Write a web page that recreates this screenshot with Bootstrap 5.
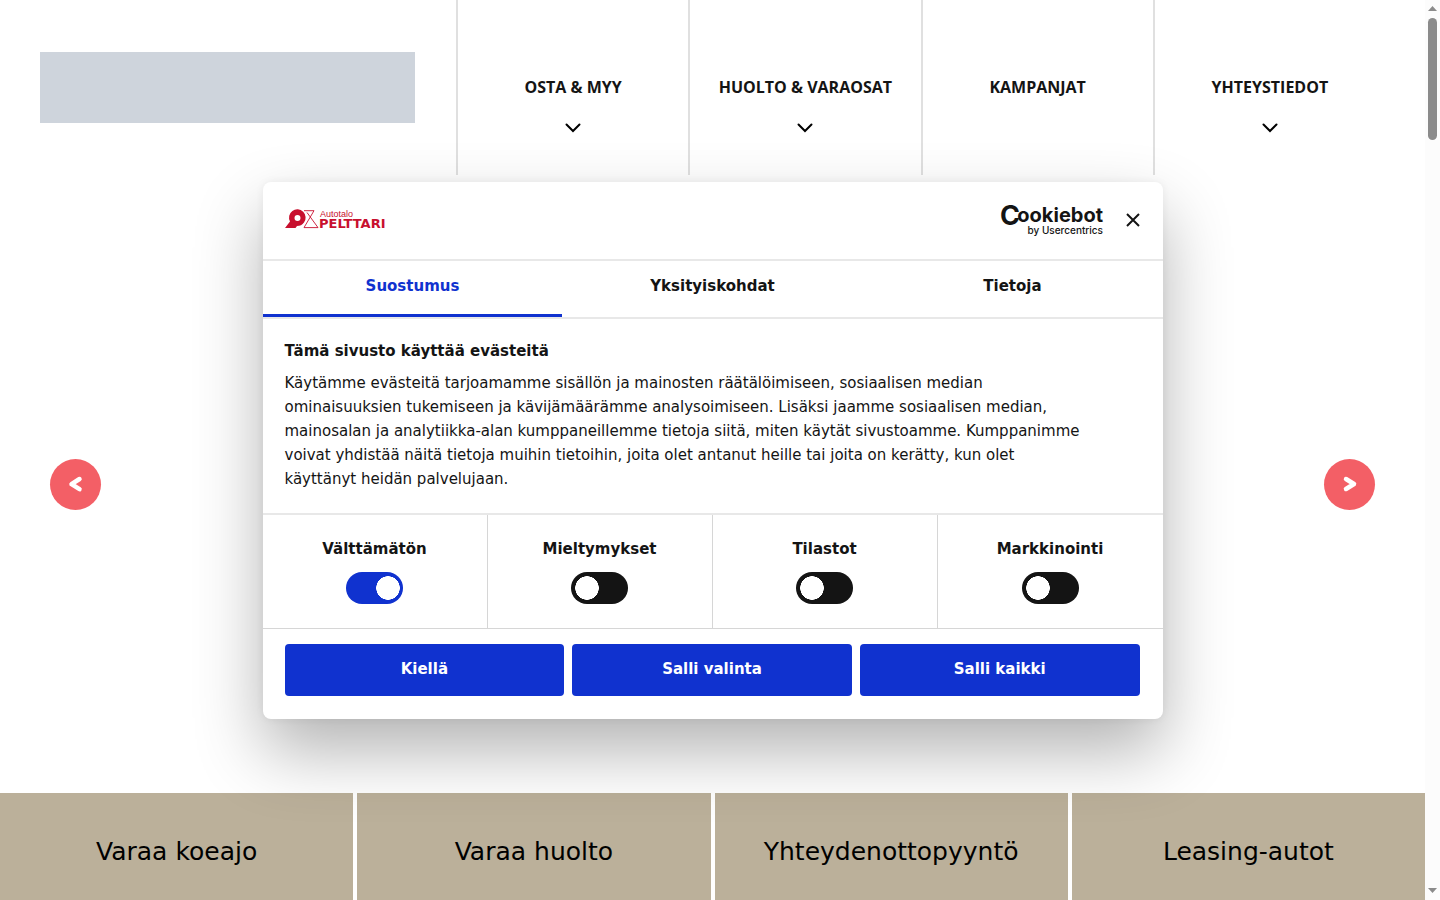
<!DOCTYPE html>
<html lang="fi">
<head>
<meta charset="utf-8">
<meta name="viewport" content="width=device-width, initial-scale=1">
<title>Autotalo Pelttari</title>
<link href="https://cdn.jsdelivr.net/npm/bootstrap@5.3.0/dist/css/bootstrap.min.css" rel="stylesheet">
<style>
  body { font-family: "DejaVu Sans", sans-serif; color: #141414; background: #fff; }
  a { color: inherit; text-decoration: none; }

  .site-header { padding: 0 40px; }
  .logo-box { flex: 0 0 416px; padding-right: 41px; }
  .logo-box a { height: 71px; background: #ced4dc; }
  .site-nav a { min-height: 175px; border-left: 2px solid #e0e0e0; padding-top: 75px; font: 700 16px/24px "Open Sans", sans-serif; }
  .site-nav svg { margin-top: 23px; }

  .hero { padding: 0 50px; }
  .hero-arrow { width: 51px; height: 51px; background: #f35f66; border: 0; }

  .tiles { gap: 4px; }
  .tiles a { height: 107px; padding-top: 10px; background: #bbb09a; color: #000; font-size: 25px; }

  .scroll-track { width: 15px; background: #fcfcfc; padding: 6px 0; }
  .scroll-thumb { width: 9px; height: 122px; background: #8b8b8b; border-radius: 5px; margin-top: 6px; }

  .consent-layer { z-index: 10; right: 15px; }
  .consent { width: 900px; max-width: 100%; border-radius: 8px; box-shadow: 0 32px 68px rgba(0,0,0,.3), 0 0 8px rgba(0,0,0,.06); font-size: 15px; line-height: 24px; }
  .consent-top { height: 79px; padding: 0 23px 0 22px; border-bottom: 2px solid #e8e8e8; }
  .consent-top svg { overflow: visible; }
  .close-btn { width: 14px; height: 14px; margin-left: 23px; }
  .consent-tabs { border-bottom: 2px solid #e8e8e8; }
  .consent-tabs button { height: 56px; padding-bottom: 3px; background: none; border: 0; border-bottom: 3px solid transparent; font-weight: 700; color: #141414; }
  .consent-tabs button.active { color: #1032cf; border-color: #1032cf; }
  .consent-text { padding: 20px 22px 22px; border-bottom: 2px solid #e8e8e8; }
  .consent-text h2 { font-size: 15px; line-height: 24px; font-weight: 700; }
  .consent-text p { max-width: 802px; }
  .choice { height: 113px; padding-top: 22px; font-weight: 700; border-right: 1px solid #d6d6d6; }
  .choice:last-child { border-right: 0; }
  .form-check-input.choice-switch { width: 57px; height: 32px; margin: 11px 0 0; border: 0; border-radius: 16px; background: #141414 radial-gradient(circle closest-side, #fff 96%, transparent) no-repeat 4px 4px / 24px 24px; }
  .form-check-input.choice-switch:checked { background-color: #1032cf; background-position: 30px 4px; }
  .consent-actions { padding: 15px 23px 23px 22px; gap: 8px; border-top: 1px solid #d6d6d6; }
  .consent-actions .btn { height: 52px; border-radius: 4px; background: #1032cf; color: #fff; font-size: 15px; font-weight: 700; }
</style>
</head>
<body>
<div class="d-flex vh-100 overflow-hidden position-relative">
  <div class="flex-grow-1 d-flex flex-column">
    <header class="site-header d-flex">
      <div class="logo-box d-flex align-items-center"><a href="#" class="d-block w-100" aria-label="Etusivu"></a></div>
      <nav class="site-nav row row-cols-4 g-0 flex-grow-1 text-center">
        <a href="#" class="col">OSTA &amp; MYY<svg class="d-block mx-auto" width="16" height="12" viewBox="0 0 16 12" fill="none" stroke="#000" stroke-width="2" stroke-linecap="round"><path d="M1.500 2.500 8 9l6.500-6.500"/></svg></a>
        <a href="#" class="col">HUOLTO &amp; VARAOSAT<svg class="d-block mx-auto" width="16" height="12" viewBox="0 0 16 12" fill="none" stroke="#000" stroke-width="2" stroke-linecap="round"><path d="M1.500 2.500 8 9l6.500-6.500"/></svg></a>
        <a href="#" class="col">KAMPANJAT</a>
        <a href="#" class="col">YHTEYSTIEDOT<svg class="d-block mx-auto" width="16" height="12" viewBox="0 0 16 12" fill="none" stroke="#000" stroke-width="2" stroke-linecap="round"><path d="M1.500 2.500 8 9l6.500-6.500"/></svg></a>
      </nav>
    </header>
    <main class="hero flex-grow-1 d-flex align-items-center justify-content-between">
      <button class="hero-arrow rounded-circle p-0 d-flex align-items-center justify-content-center" aria-label="Edellinen"><svg width="16" height="18" viewBox="0 0 16 18" fill="none" stroke="#fff" stroke-width="4.500" stroke-linecap="round" stroke-linejoin="round"><path d="M11.500 4 3.500 9.200l8 5"/></svg></button>
      <button class="hero-arrow rounded-circle p-0 d-flex align-items-center justify-content-center" aria-label="Seuraava"><svg width="16" height="18" viewBox="0 0 16 18" fill="none" stroke="#fff" stroke-width="4.500" stroke-linecap="round" stroke-linejoin="round"><path d="M4 4l8 5-8 5"/></svg></button>
    </main>
    <section class="tiles d-flex">
      <a href="#" class="d-flex w-100 align-items-center justify-content-center">Varaa koeajo</a>
      <a href="#" class="d-flex w-100 align-items-center justify-content-center">Varaa huolto</a>
      <a href="#" class="d-flex w-100 align-items-center justify-content-center">Yhteydenottopyyntö</a>
      <a href="#" class="d-flex w-100 align-items-center justify-content-center">Leasing-autot</a>
    </section>
  </div>

  <div class="scroll-track flex-shrink-0 d-flex flex-column align-items-center" aria-hidden="true">
    <svg width="9" height="6" viewBox="0 0 9 6"><path d="M0 5 4.500 0 9 5z" fill="#8b8b8b"/></svg>
    <div class="scroll-thumb"></div>
    <svg class="mt-auto" width="9" height="6" viewBox="0 0 9 6"><path d="M0 0h9L4.500 5z" fill="#8b8b8b"/></svg>
  </div>

  <div class="consent-layer position-absolute top-0 bottom-0 start-0 d-flex align-items-center justify-content-center">
    <div class="consent bg-white overflow-hidden" role="dialog" aria-labelledby="consent-title">
      <div class="consent-top d-flex align-items-center">
        <svg width="102" height="22" viewBox="0 0 102 22" fill="#c8102e">
          <path fill-rule="evenodd" d="M0 19 5 12.500A8.300 8.300 0 1 1 19 13.500Q16.500 17 12 17L10.500 19zM12.500 6a3 3 0 1 0 .01 6 3 3 0 0 0-.01-6z"/>
          <path d="M19 1.700h10L19 18.600h14L22 3.500" fill="none" stroke="#c8102e" stroke-width=".9"/>
          <text x="35" y="8" font-family="Liberation Sans, sans-serif" font-size="9">Autotalo</text>
          <text x="34" y="19" font-family="DejaVu Sans, sans-serif" font-weight="700" font-size="13">PELTTARI</text>
        </svg>
        <svg class="ms-auto" width="104" height="34" viewBox="0 0 104 34" fill="#141414" font-family="Inter, sans-serif">
          <text x="1" y="22" font-size="27" font-weight="700">C</text>
          <text x="104" y="19" font-size="20" font-weight="700" text-anchor="end">ookiebot</text>
          <text x="104" y="31" font-size="10" font-weight="500" text-anchor="end">by Usercentrics</text>
        </svg>
        <button class="close-btn border-0 bg-transparent p-0 d-flex" aria-label="Sulje"><svg width="14" height="14" viewBox="0 0 14 14" stroke="#141414" stroke-width="2"><path d="M1 1l12 12M13 1 1 13"/></svg></button>
      </div>
      <div class="consent-tabs row row-cols-3 g-0" role="tablist">
        <button class="col active" role="tab">Suostumus</button>
        <button class="col" role="tab">Yksityiskohdat</button>
        <button class="col" role="tab">Tietoja</button>
      </div>
      <div class="consent-text">
        <h2 id="consent-title" class="mb-2">Tämä sivusto käyttää evästeitä</h2>
        <p class="mb-0">Käytämme evästeitä tarjoamamme sisällön ja mainosten räätälöimiseen, sosiaalisen median ominaisuuksien tukemiseen ja kävijämäärämme analysoimiseen. Lisäksi jaamme sosiaalisen median, mainosalan ja analytiikka-alan kumppaneillemme tietoja siitä, miten käytät sivustoamme. Kumppanimme voivat yhdistää näitä tietoja muihin tietoihin, joita olet antanut heille tai joita on kerätty, kun olet käyttänyt heidän palvelujaan.</p>
      </div>
      <div class="row row-cols-4 g-0 text-center">
        <div class="choice col d-flex flex-column align-items-center"><label for="c1">Välttämätön</label><input id="c1" class="form-check-input choice-switch" type="checkbox" role="switch" checked></div>
        <div class="choice col d-flex flex-column align-items-center"><label for="c2">Mieltymykset</label><input id="c2" class="form-check-input choice-switch" type="checkbox" role="switch"></div>
        <div class="choice col d-flex flex-column align-items-center"><label for="c3">Tilastot</label><input id="c3" class="form-check-input choice-switch" type="checkbox" role="switch"></div>
        <div class="choice col d-flex flex-column align-items-center"><label for="c4">Markkinointi</label><input id="c4" class="form-check-input choice-switch" type="checkbox" role="switch"></div>
      </div>
      <div class="consent-actions d-flex">
        <button class="btn w-100">Kiellä</button>
        <button class="btn w-100">Salli valinta</button>
        <button class="btn w-100">Salli kaikki</button>
      </div>
    </div>
  </div>
</div>
<script src="https://cdn.jsdelivr.net/npm/bootstrap@5.3.0/dist/js/bootstrap.bundle.min.js"></script>
</body>
</html>
